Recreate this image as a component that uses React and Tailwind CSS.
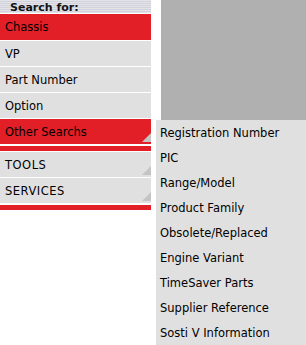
import React from 'react';

const mainItems = [
    { label: 'Chassis', active: true },
    { label: 'VP' },
    { label: 'Part Number' },
    { label: 'Option' },
];

const flyoutItems = [
    'Registration Number',
    'PIC',
    'Range/Model',
    'Product Family',
    'Obsolete/Replaced',
    'Engine Variant',
    'TimeSaver Parts',
    'Supplier Reference',
    'Sosti V Information',
];

const Corner = () => (
    <svg className="absolute right-0 bottom-[2px]" width="9" height="9" viewBox="0 0 9 9">
        <polygon points="9,0 9,9 0,9" fill="#c4c4c4" />
    </svg>
);

const Row = ({ children, red, corner, upper }) => (
    <div
        className={`relative h-[25px] flex items-center pl-[5px] pt-[2px] mt-px ${red ? 'bg-[#e21f26]' : 'bg-[#e0e0e0]'} ${upper ? 'tracking-[0.5px]' : ''}`}
    >
        {children}
        {corner && <Corner />}
    </div>
);

export default function App() {
    return (
        <div className="relative w-[306px] h-[345px] bg-white flex overflow-hidden font-['DejaVu_Sans',Verdana,sans-serif] text-[11.5px] text-black leading-none">
            {/* Left menu */}
            <div className="w-[151px] flex flex-col">
                <div className="h-[13px] pl-[10px] pt-[2px] flex items-center font-bold text-[11px] text-[#111] bg-[repeating-linear-gradient(to_bottom,#e4e4e8_0px,#e4e4e8_1px,#d2d2dc_1px,#d2d2dc_2px)]">
                    Search for:
                </div>
                <div className="h-[26px] mt-px pt-[2px] flex items-center pl-[5px] bg-[#e21f26]">Chassis</div>
                {mainItems.slice(1).map((item) => (
                    <Row key={item.label}>{item.label}</Row>
                ))}
                <Row red corner>Other Searchs</Row>
                <div className="h-[5px] mt-[2px] bg-[#e21f26]" />
                <Row corner upper>TOOLS</Row>
                <Row corner upper>SERVICES</Row>
                <div className="h-[5px] mt-[2px] bg-[#e21f26]" />
            </div>

            {/* Grey preview box */}
            <div className="ml-[10px] w-[145px] h-[120px] bg-[#b0b0b0]" />

            {/* Flyout */}
            <div className="absolute left-[156px] top-[120px] w-[150px] bg-[#e0e0e0]">
                {flyoutItems.map((label) => (
                    <div key={label} className="h-[25px] flex items-center pl-[4px] pt-[2px]">
                        {label}
                    </div>
                ))}
            </div>
        </div>
    );
}
